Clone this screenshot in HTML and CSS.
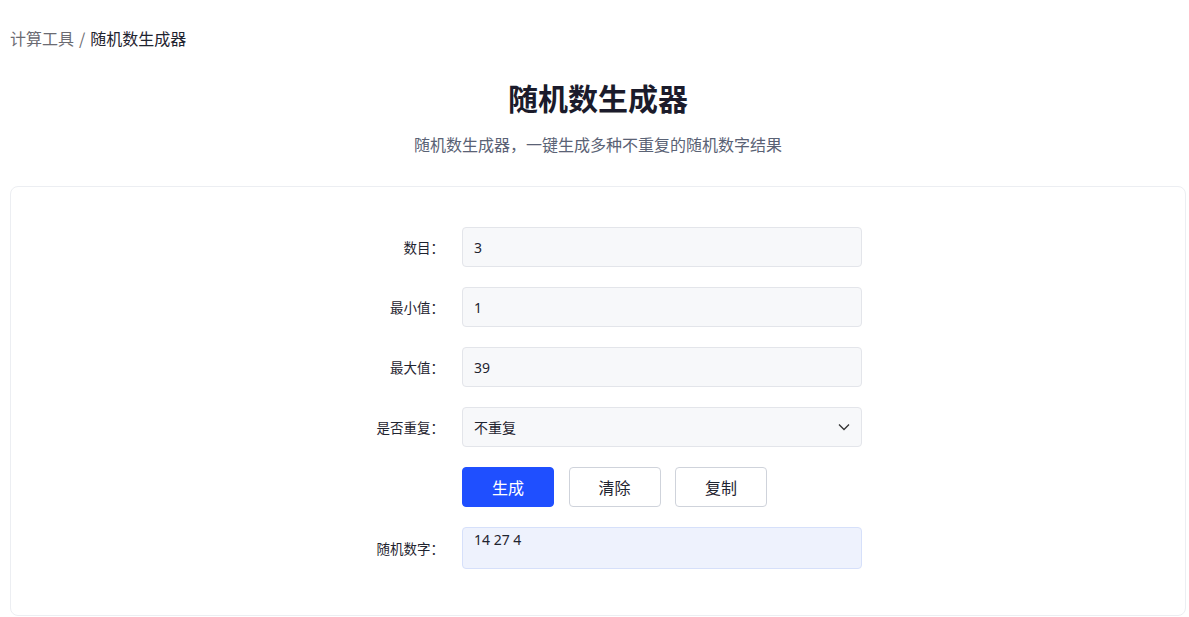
FILE: index.html
```html
<!DOCTYPE html>
<html lang="zh-CN">
<head>
<meta charset="utf-8">
<title>随机数生成器</title>
<link rel="stylesheet" href="styles.css">
</head>
<body>
<div class="page">
  <nav class="crumbs"><a class="crumb-link" href="#">计算工具</a><span class="sep">/</span><span class="crumb-cur">随机数生成器</span></nav>
  <h1 class="title">随机数生成器</h1>
  <p class="subtitle">随机数生成器，一键生成多种不重复的随机数字结果</p>
  <section class="card">
    <div class="form">
      <label class="label">数目：</label>
      <div class="input">3</div>
      <label class="label">最小值：</label>
      <div class="input">1</div>
      <label class="label">最大值：</label>
      <div class="input">39</div>
      <label class="label">是否重复：</label>
      <div class="input select">
        <span>不重复</span>
        <svg class="chev" width="12" height="8" viewBox="0 0 12 8"><path d="M1 1.5 L6 6.5 L11 1.5" fill="none" stroke="#333" stroke-width="1.3"/></svg>
      </div>
      <span class="label"></span>
      <div class="buttons">
        <button class="btn primary">生成</button>
        <button class="btn">清除</button>
        <button class="btn">复制</button>
      </div>
      <label class="label">随机数字：</label>
      <div class="result">14 27 4</div>
    </div>
  </section>
</div>
</body>
</html>
```
FILE: styles.css
```css
* { box-sizing: border-box; }
body {
  margin: 0;
  background: #fff;
  font-family: "Noto Sans CJK SC", "Noto Sans", sans-serif;
  color: #1f2937;
}
.page { padding: 0 3px 0 10px; }
.crumbs {
  padding-top: 28px;
  font-size: 16px;
  line-height: 20px;
  display: flex;
  align-items: center;
}
.crumb-link { color: #6b6b72; text-decoration: none; }
.sep { color: #6b6b72; margin: 0 5px 0 5px; }
.crumb-cur { color: #1f2430; }
.title {
  margin: 29px 0 0;
  text-align: center;
  font-size: 30px;
  line-height: 40px;
  font-weight: 700;
  color: #1b1b2b;
}
.subtitle {
  margin: 15px 0 0;
  text-align: center;
  font-size: 16px;
  line-height: 24px;
  color: #5a6275;
}
.card {
  margin-top: 30px;
  border: 1px solid #eceef2;
  border-radius: 8px;
  height: 430px;
  padding-top: 40px;
}
.form {
  display: grid;
  grid-template-columns: 451px 400px;
  row-gap: 20px;
  align-items: center;
}
.label {
  text-align: right;
  padding-right: 18px;
  font-size: 13.5px;
  color: #1f2430;
}
.input {
  height: 40px;
  background: #f7f8fa;
  border: 1px solid #e3e5ea;
  border-radius: 4px;
  padding: 0 11px;
  display: flex;
  align-items: center;
  font-family: "Noto Sans", sans-serif;
  font-size: 14px;
  color: #1f2430;
}
.select {
  justify-content: space-between;
  font-family: "Noto Sans CJK SC", sans-serif;
}
.buttons { display: flex; gap: 14.5px; }
.btn {
  width: 92px;
  height: 40px;
  border: 1px solid #cfd3db;
  border-radius: 4px;
  background: #fff;
  font-family: "Noto Sans CJK SC", sans-serif;
  font-size: 16px;
  color: #1f2430;
  padding: 0;
}
.primary {
  background: #1f4fff;
  border-color: #1f4fff;
  color: #fff;
}
.result {
  height: 42px;
  background: #eef2fd;
  border: 1px solid #d6e0fa;
  border-radius: 4px;
  padding: 2px 11px;
  font-family: "Noto Sans", sans-serif;
  font-size: 14px;
  line-height: 20px;
  color: #1f2430;
  align-self: start;
}
```
